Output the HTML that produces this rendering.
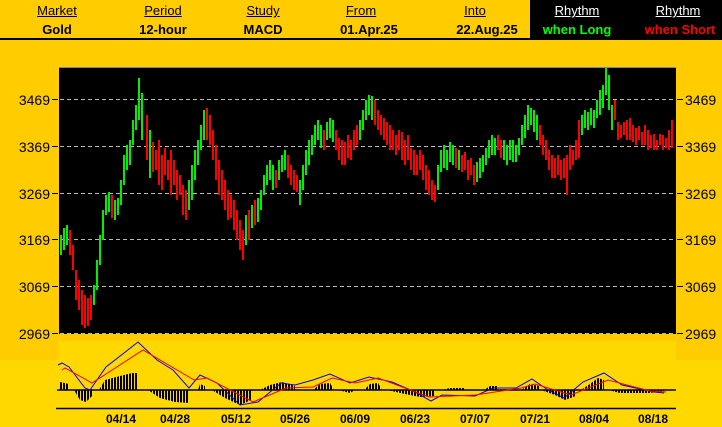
<!DOCTYPE html>
<html><head><meta charset="utf-8"><style>
body{margin:0;width:722px;height:427px;overflow:hidden;background:#FFCC00;font-family:"Liberation Sans",sans-serif}
#hdr{position:absolute;left:0;top:0;width:722px;height:40px;background:#FFCC00;border-bottom:2px solid #000;box-sizing:border-box}
.c{position:absolute;text-align:center;width:110px;font-size:13px}
.c .a{position:absolute;top:3px;width:100%;text-decoration:underline}
.c .b{position:absolute;top:22px;width:100%;font-weight:bold}
#blk{position:absolute;left:530px;top:0;width:192px;height:38px;background:#000}
#low{position:absolute;left:0;top:341px;width:722px;height:86px;background:#FFD800}
svg{position:absolute;left:0;top:0}
</style></head><body>
<div id="low"></div>
<div style="position:absolute;left:0;top:341px;width:58px;height:19px;background:#FFCC00"></div>
<div style="position:absolute;left:676px;top:341px;width:46px;height:19px;background:#FFCC00"></div>
<div id="hdr"></div><div id="blk"></div>
<div class="c" style="left:2px"><div class="a">Market</div><div class="b">Gold</div></div>
<div class="c" style="left:108px"><div class="a">Period</div><div class="b">12-hour</div></div>
<div class="c" style="left:208px"><div class="a">Study</div><div class="b">MACD</div></div>
<div class="c" style="left:306px"><div class="a">From</div><div class="b" style="left:8px">01.Apr.25</div></div>
<div class="c" style="left:422px"><div class="a" style="left:-2px">Into</div><div class="b" style="left:10px">22.Aug.25</div></div>
<div class="c" style="left:522px;color:#fff"><div class="a">Rhythm</div><div class="b" style="color:#00ff00">when Long</div></div>
<div class="c" style="left:620px;color:#fff"><div class="a" style="left:3px">Rhythm</div><div class="b" style="color:#ff0000;left:5px">when Short</div></div>
<svg width="722" height="427" font-family="Liberation Sans" font-size="14">
<defs><pattern id="hp" width="3" height="10" patternUnits="userSpaceOnUse"><rect width="2" height="10" fill="#000"/></pattern></defs>
<rect x="59" y="67" width="617" height="267" fill="#000"/>
<line x1="59" y1="67.5" x2="676" y2="67.5" stroke="#888"/>
<g stroke="#bbb" stroke-dasharray="4,3">
<line x1="60" y1="99.5" x2="675" y2="99.5"/><line x1="60" y1="146.5" x2="675" y2="146.5"/><line x1="60" y1="193.5" x2="675" y2="193.5"/><line x1="60" y1="239.5" x2="675" y2="239.5"/><line x1="60" y1="286.5" x2="675" y2="286.5"/><line x1="60" y1="333.5" x2="675" y2="333.5"/></g>
<path stroke="#000" d="M52,99.5H58M52,146.5H58M52,193.5H58M52,239.5H58M52,286.5H58M52,333.5H58M677,99.5H683M677,146.5H683M677,193.5H683M677,239.5H683M677,286.5H683M677,333.5H683"/>
<g text-anchor="end"><text x="50" y="105">3469</text><text x="50" y="152">3369</text><text x="50" y="199">3269</text><text x="50" y="245">3169</text><text x="50" y="292">3069</text><text x="50" y="339">2969</text></g>
<text x="685" y="105">3469</text><text x="685" y="152">3369</text><text x="685" y="199">3269</text><text x="685" y="245">3169</text><text x="685" y="292">3069</text><text x="685" y="339">2969</text>
<path stroke="#00ee00" stroke-width="2" fill="none" d="M61,235V255M64,228V250M67,225V245M94,285V305M97,260V290M100,235V265M103,210V240M106,195V215M109,192V212M115,200V220M118,198V215M121,180V205M124,155V185M127,145V170M130,140V165M133,120V145M136,105V130M139,78V120M142,93V140M150,130V178M189,180V210M192,165V200M195,150V180M198,140V165M201,125V150M204,110V140M246,215V245M252,205V228M258,198V222M261,190V210M264,175V195M267,165V185M270,160V180M273,165V190M279,160V180M282,155V172M285,150V170M300,180V205M303,165V190M306,150V175M309,140V165M312,135V155M315,125V145M318,120V140M321,125V148M327,122V140M330,118V138M333,120V142M360,120V140M363,110V130M366,100V120M369,95V115M372,96V120M438,165V190M441,150V172M444,145V168M447,150V170M450,142V162M453,145V165M459,150V170M477,162V182M480,158V178M483,155V172M486,148V165M489,140V158M492,135V155M495,138V155M504,140V160M507,145V165M510,140V160M513,140V162M516,145V162M519,138V155M522,125V145M525,115V138M528,105V130M531,108V125M534,110V132M537,115V140M582,115V135M585,110V128M588,112V130M591,108V125M594,110V128M597,100V118M600,90V115M603,85V108M606,68V95M609,75V110M612,105V130"/>
<path stroke="#ff0000" stroke-width="2" fill="none" d="M70,230V255M73,245V270M76,270V300M79,280V310M82,290V325M85,295V328M88,298V326M91,295V320M112,195V218M147,115V160M153,142V172M156,150V170M159,140V185M162,155V190M165,148V175M168,160V180M171,150V195M174,160V185M177,170V200M180,175V195M183,185V215M186,190V220M207,108V140M210,115V145M213,130V160M216,145V180M219,160V195M222,170V200M225,180V210M228,190V220M231,195V218M234,200V230M237,210V240M240,220V250M243,230V260M249,210V240M255,200V225M276,170V188M288,155V178M291,165V185M294,170V190M297,175V192M324,130V150M336,130V150M339,138V160M342,140V165M345,142V165M348,135V158M351,140V160M354,130V150M357,125V145M375,100V125M378,110V130M381,115V135M384,118V140M387,122V145M390,125V150M393,130V150M396,135V155M399,130V150M402,132V160M405,140V165M408,135V160M411,148V170M414,150V175M417,155V175M420,150V170M423,155V180M426,165V190M429,170V195M432,180V200M435,185V202M456,148V168M462,155V172M465,152V170M468,160V180M471,158V175M474,165V185M498,135V150M501,140V158M540,125V145M543,135V155M546,140V160M549,150V170M552,155V178M555,158V178M558,155V175M561,160V180M564,158V178M567,155V195M570,145V170M573,150V165M576,140V160M579,120V158M615,100V120M618,122V140M621,125V138M624,122V135M627,120V140M630,118V140M633,125V142M636,128V145M639,126V140M642,132V145M645,125V145M648,130V150M651,135V148M654,134V150M657,140V150M660,134V145M663,135V150M666,138V148M669,130V150M672,120V148"/>
<path fill="url(#hp)" d="M60,390L60,382L69,384L69,390ZM74,390L80,400L86,402L92,396L92,390ZM99,390L105,380L120,376L132,373L138,373L138,390ZM148,390L160,398L175,402L189,403L189,390ZM198,390L200,384L205,386L205,390ZM212,390L225,398L240,405L251,400L251,390ZM260,390L270,385L282,382L295,386L295,390ZM313,390L320,384L330,383L334,390ZM338,390L350,393L355,390ZM364,390L370,384L378,383L382,390ZM387,390L405,394L420,397L435,396L435,390ZM442,390L450,388L465,388L465,390ZM484,390L490,386L498,386L498,390ZM521,390L530,384L539,386L539,390ZM541,390L555,395L565,400L576,396L576,390ZM581,390L590,384L598,378L604,380L604,390ZM608,390L620,393L650,393L664,391L664,390Z"/>
<line x1="57" y1="390" x2="676" y2="390" stroke="#000" stroke-width="1.5"/>
<polyline fill="none" stroke="#0000ff" points="58,365 62,363 69,367 85,388 90,390 106,367 124,353 138,342 157,360 173,370 189,388 200,375 217,383 240,405 258,402 281,383 295,385 313,380 330,374 350,383 369,377 392,382 415,392 431,401 442,395 475,396 493,388 516,388 532,379 548,390 564,398 583,382 604,373 622,385 654,392 664,393"/>
<polyline fill="none" stroke="#ff0000" points="62,370 65,368 92,383 143,350 194,380 207,378 253,402 286,388 313,387 332,378 355,383 378,378 429,397 475,395 521,388 535,384 571,395 608,380 650,391 666,392"/>
<line x1="56" y1="408.5" x2="676" y2="408.5" stroke="#000" stroke-width="1.5"/>
<g text-anchor="middle" font-size="12" font-weight="bold"><text x="121" y="423">04/14</text><text x="175" y="423">04/28</text><text x="236" y="423">05/12</text><text x="295" y="423">05/26</text><text x="355" y="423">06/09</text><text x="415" y="423">06/23</text><text x="475" y="423">07/07</text><text x="535" y="423">07/21</text><text x="594" y="423">08/04</text><text x="653" y="423">08/18</text></g>
</svg>
</body></html>
